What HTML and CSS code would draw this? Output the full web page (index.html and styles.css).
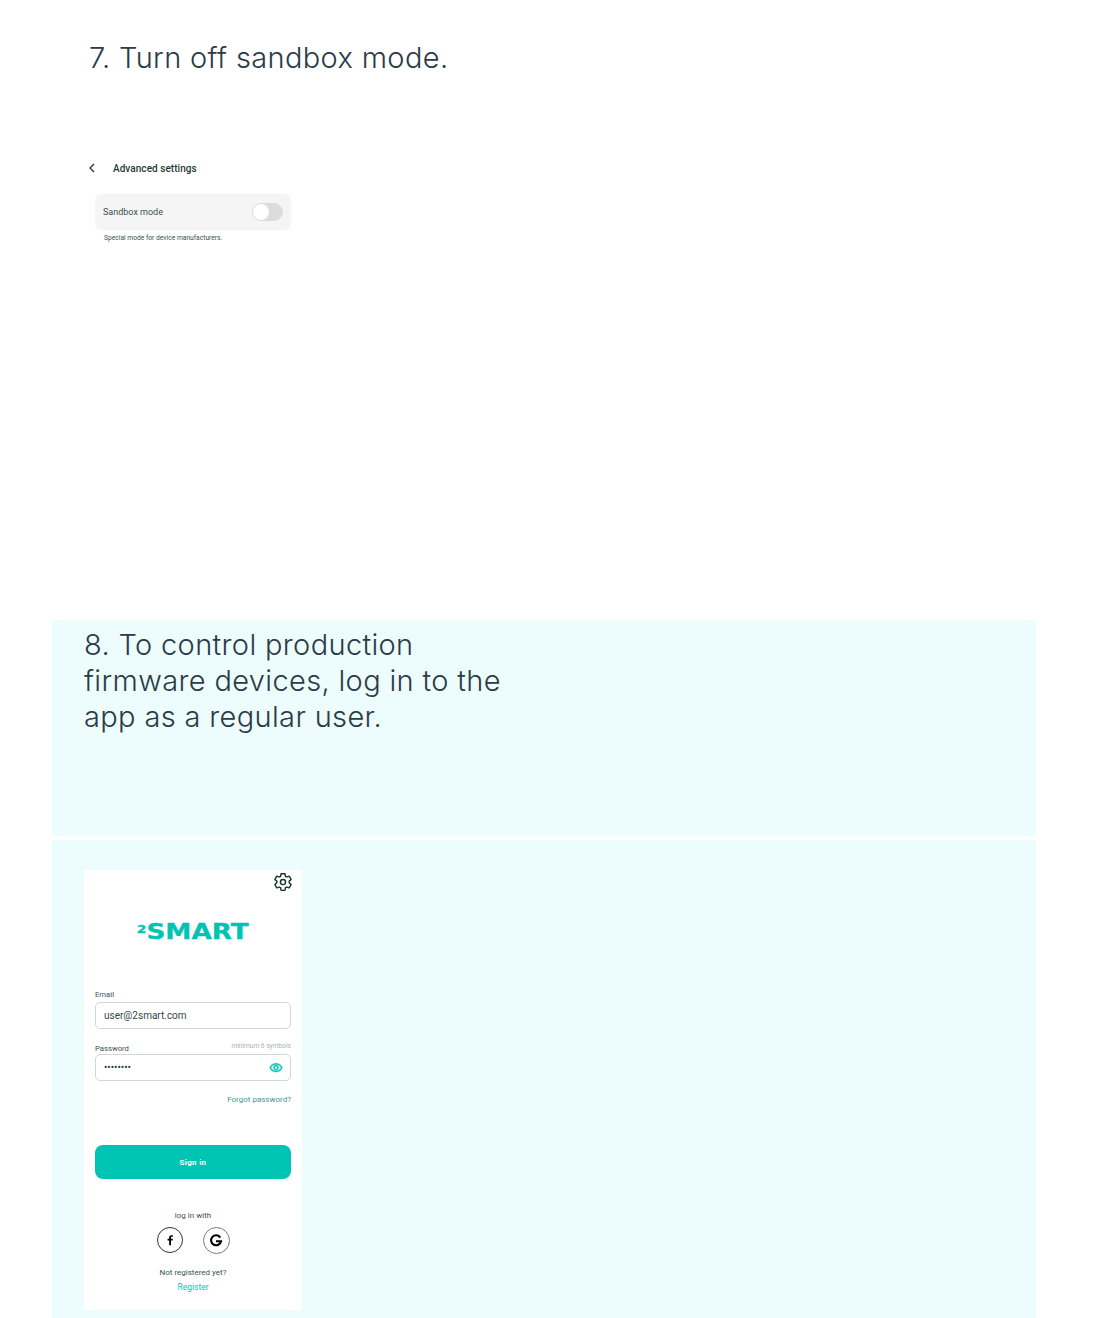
FILE: index.html
```html
<!DOCTYPE html>
<html lang="en">
<head>
  <meta charset="UTF-8">
  <title>Turn off sandbox mode</title>
  <link rel="stylesheet" href="styles.css">
</head>
<body>
  <section class="step-white">
    <h2 class="step-title">7. Turn off sandbox mode.</h2>
    <div class="settings-shot">
      <div class="settings-head">
        <svg class="back-icon" viewBox="0 0 6 10" width="6" height="10"><path d="M5 1 1 5l4 4" fill="none" stroke="#1f3a38" stroke-width="1.3"/></svg>
        <span>Advanced settings</span>
      </div>
      <div class="settings-row">
        <span>Sandbox mode</span>
        <span class="toggle"><span class="toggle-knob"></span></span>
      </div>
      <p class="settings-note">Special mode for device manufacturers.</p>
    </div>
  </section>

  <section class="band band-text">
    <h2 class="band-title">8. To control production firmware devices, log in to the app as a regular user.</h2>
  </section>

  <section class="band band-shot">
    <div class="login">
      <div class="login-top">
        <svg viewBox="0 0 24 24" width="20" height="20"><g fill="none" stroke="#173331" stroke-width="1.7"><path d="M19.43 12.98c.04-.32.07-.64.07-.98 0-.34-.03-.66-.07-.98l2.11-1.65c.19-.15.24-.42.12-.64l-2-3.46c-.09-.16-.26-.25-.44-.25-.06 0-.12.01-.17.03l-2.49 1c-.52-.4-1.08-.73-1.69-.98l-.38-2.65C14.46 2.18 14.25 2 14 2h-4c-.25 0-.46.18-.49.42l-.38 2.65c-.61.25-1.17.59-1.69.98l-2.49-1c-.06-.02-.12-.03-.18-.03-.17 0-.34.09-.43.25l-2 3.46c-.13.22-.07.49.12.64l2.11 1.65c-.04.32-.07.65-.07.98 0 .33.03.66.07.98l-2.11 1.65c-.19.15-.24.42-.12.64l2 3.46c.09.16.26.25.44.25.06 0 .12-.01.17-.03l2.49-1c.52.4 1.08.73 1.69.98l.38 2.65c.03.24.24.42.49.42h4c.25 0 .46-.18.49-.42l.38-2.65c.61-.25 1.17-.59 1.69-.98l2.49 1c.06.02.12.03.18.03.17 0 .34-.09.43-.25l2-3.46c.12-.22.07-.49-.12-.64l-2.11-1.65z"/><circle cx="12" cy="12" r="3.1"/></g></svg>
      </div>
      <div class="logo"><span class="logo-word"><span class="logo-two">2</span>SMART</span></div>
      <div class="field-label"><span>Email</span></div>
      <div class="field">user@2smart.com</div>
      <div class="field-label field-label-second"><span>Password</span><span class="hint">minimum 6 symbols</span></div>
      <div class="field field-pass">
        <span class="dots">••••••••</span>
        <svg class="eye" viewBox="0 0 24 24" width="14" height="14"><path fill="#00c4b3" stroke="#00c4b3" stroke-width="0.6" d="M12 6c3.79 0 7.17 2.13 8.82 5.5C19.17 14.87 15.79 17 12 17s-7.17-2.13-8.82-5.5C4.83 8.13 8.21 6 12 6m0-2C7 4 2.73 7.11 1 11.5 2.73 15.89 7 19 12 19s9.27-3.11 11-7.5C21.27 7.11 17 4 12 4zm0 5c1.38 0 2.5 1.12 2.5 2.5S13.38 14 12 14s-2.5-1.12-2.5-2.5S10.62 9 12 9m0-2c-2.48 0-4.5 2.02-4.5 4.5S9.52 16 12 16s4.5-2.02 4.5-4.5S14.48 7 12 7z"/></svg>
      </div>
      <div class="forgot">Forgot password?</div>
      <div class="signin">Sign in</div>
      <div class="login-with">log in with</div>
      <div class="socials">
        <span class="social social-fb">
          <svg viewBox="0 0 12 12" width="12" height="12"><path fill="#000" d="M7 11.2V6.6h1.6l.25-1.8H7V3.7c0-.52.15-.88.9-.88h.97V1.2C8.7 1.18 8.13 1.13 7.48 1.13 6.1 1.13 5.16 1.97 5.16 3.5v1.3H3.6v1.8h1.56v4.6z"/></svg>
        </span>
        <span class="social social-g">
          <svg viewBox="0 0 14 14" width="14" height="14"><path fill="none" stroke="#000" stroke-width="2.1" d="M11.3 3.6A5 5 0 1 0 12 7.2H7"/></svg>
        </span>
      </div>
      <div class="not-registered">Not registered yet?</div>
      <div class="register">Register</div>
    </div>
  </section>
</body>
</html>
```

FILE: styles.css
```css
* {
  box-sizing: border-box;
}
body {
  margin: 0;
  background: #fff;
  font-family: Roboto, sans-serif;
  color: #3a5250;
}
h2 {
  margin: 0;
  font-family: Inter, sans-serif;
  font-weight: 300;
  font-size: 29px;
  line-height: 36px;
  letter-spacing: 0.35px;
  color: #2b3b47;
}

.step-white {
  height: 620px;
  padding: 40px 0 0 89px;
}
.settings-shot {
  width: 202px;
  margin-top: 84px;
}
.settings-head {
  display: flex;
  align-items: center;
  gap: 18px;
  height: 16px;
  margin-top: 4px;
  font-size: 10px;
  font-weight: 500;
  letter-spacing: 0.05px;
  color: #1f3a38;
}
.settings-row {
  display: flex;
  align-items: center;
  justify-content: space-between;
  width: 196px;
  height: 36px;
  margin: 18px 0 0 6px;
  padding: 0 8px;
  background: #f5f5f5;
  border-radius: 6px;
  font-size: 9px;
}
.toggle {
  display: block;
  width: 31px;
  height: 18px;
  padding: 1px;
  background: #dcdcdc;
  border-radius: 9px;
}
.toggle-knob {
  display: block;
  width: 16px;
  height: 16px;
  background: #fff;
  border-radius: 50%;
}
.settings-note {
  margin: 4px 0 0 15px;
  font-size: 6.7px;
  line-height: 8px;
}

.band {
  width: 984px;
  margin-left: 52px;
  background: #edfcfc;
}
.band-text {
  height: 216px;
  padding: 7px 0 0 32px;
}
.band-title {
  width: 430px;
}
.band-shot {
  height: 478px;
  margin-top: 4px;
  padding: 30px 0 0 32px;
}

.login {
  width: 218px;
  height: 440px;
  padding: 0 11px;
  background: #fff;
}
.login-top {
  display: flex;
  justify-content: flex-end;
  height: 40px;
  padding-top: 2px;
  margin-right: -2px;
}
.logo {
  display: flex;
  justify-content: center;
  height: 45px;
  margin-top: 6px;
}
.logo-word {
  font-family: "DejaVu Sans", sans-serif;
  font-weight: 700;
  font-size: 21px;
  line-height: 28px;
  color: #00c4b3;
  -webkit-text-stroke: 0.3px #00c4b3;
  transform: scaleX(1.25);
}
.logo-two {
  font-size: 11px;
  vertical-align: 6px;
}
.field-label {
  display: flex;
  justify-content: space-between;
  align-items: flex-start;
  height: 12px;
  margin-top: 29px;
  font-size: 7.7px;
  line-height: 9px;
}
.field-label-second {
  margin-top: 13px;
  padding-top: 2px;
}
.hint {
  margin-top: -2px;
  font-size: 6.6px;
  color: #a9b3b2;
}
.field {
  display: flex;
  align-items: center;
  justify-content: space-between;
  height: 27px;
  padding: 0 8px 0 8px;
  border: 1px solid #ced8d7;
  border-radius: 5px;
  font-size: 10px;
  color: #33474a;
}
.dots {
  font-size: 10px;
  color: #1f3a38;
}
.eye {
  margin-right: -1px;
}
.forgot {
  margin-top: 14px;
  font-size: 8px;
  line-height: 10px;
  text-align: right;
  color: #3f9a90;
}
.signin {
  height: 34px;
  margin-top: 40px;
  background: #00c4b3;
  border-radius: 8px;
  font-size: 8px;
  font-weight: 700;
  line-height: 35px;
  letter-spacing: 0.3px;
  text-align: center;
  color: #fff;
}
.login-with {
  margin-top: 32px;
  font-size: 8px;
  line-height: 10px;
  text-align: center;
}
.socials {
  display: flex;
  justify-content: center;
  gap: 20px;
  margin-top: 6px;
}
.social {
  display: flex;
  align-items: center;
  justify-content: center;
  width: 26px;
  height: 26px;
  border: 1px solid #333;
  border-radius: 50%;
}
.social-g {
  width: 27px;
  height: 27px;
  border-color: #777;
}
.not-registered {
  margin-top: 14px;
  font-size: 8px;
  line-height: 10px;
  text-align: center;
}
.register {
  margin-top: 4px;
  font-size: 8.5px;
  line-height: 10px;
  text-align: center;
  color: #00c9bd;
}
```
